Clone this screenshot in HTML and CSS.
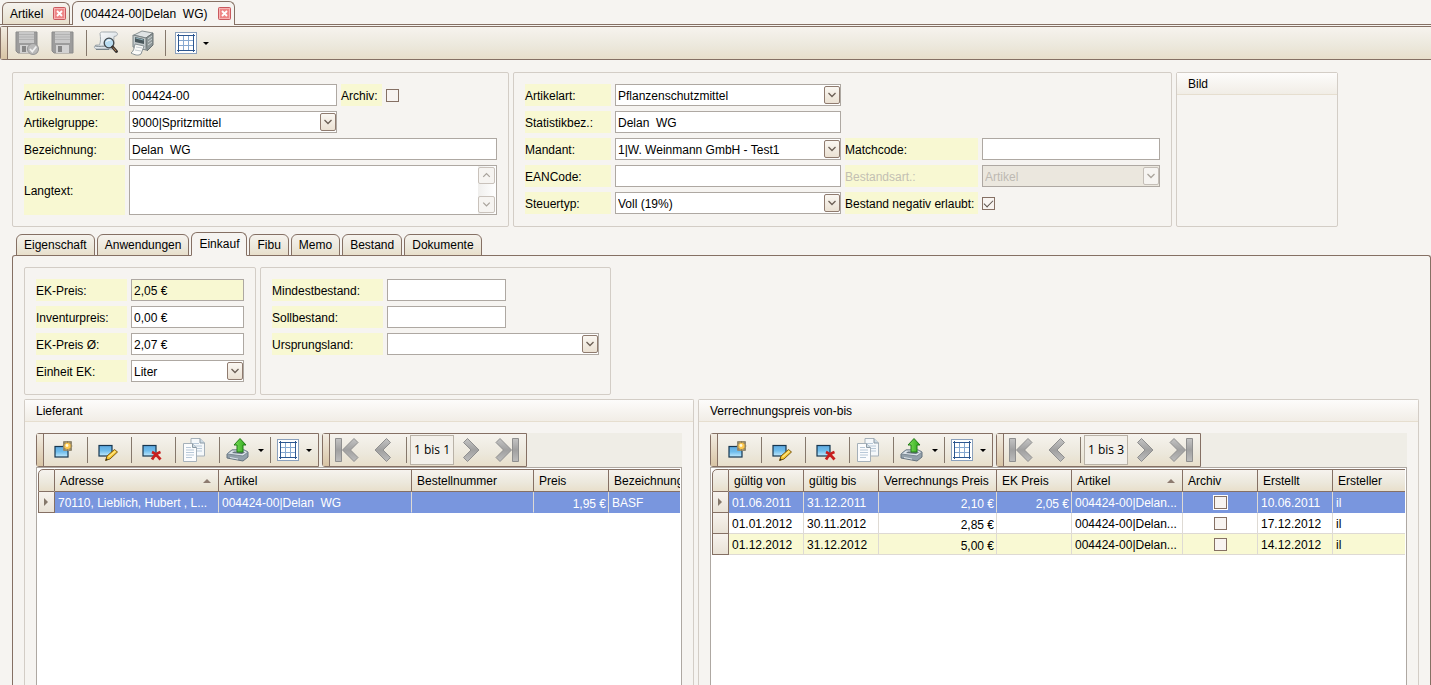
FILE: index.html
```html
<!DOCTYPE html>
<html lang="de">
<head>
<meta charset="utf-8">
<title>Artikel 004424-00</title>
<link rel="stylesheet" href="styles.css">
</head>
<body>
<svg class="defs" aria-hidden="true">
  <defs>
    <linearGradient id="g-blue" x1="0" y1="0" x2="0" y2="1"><stop offset="0" stop-color="#5fa9e0"/><stop offset=".5" stop-color="#6fbdec"/><stop offset="1" stop-color="#c4ebfd"/></linearGradient>
    <linearGradient id="g-gray" x1="0" y1="0" x2="0" y2="1"><stop offset="0" stop-color="#c4c4c4"/><stop offset=".5" stop-color="#a0a0a0"/><stop offset="1" stop-color="#bdbdbd"/></linearGradient>
    <linearGradient id="g-green" x1="0" y1="0" x2="1" y2="0"><stop offset="0" stop-color="#7ee05a"/><stop offset="1" stop-color="#2fa81c"/></linearGradient>
    <linearGradient id="g-paper" x1="0" y1="0" x2="1" y2="1"><stop offset="0" stop-color="#ffffff"/><stop offset="1" stop-color="#c9d3da"/></linearGradient>
    <radialGradient id="g-glow"><stop offset="0" stop-color="#fff3b0"/><stop offset=".45" stop-color="#f0b840"/><stop offset="1" stop-color="#8f8468" stop-opacity=".6"/></radialGradient>
  </defs>
  <symbol id="i-close" viewBox="0 0 13 13"><rect x=".5" y=".5" width="12" height="12" rx="1" fill="#ee8686" stroke="#c9595e"/><rect x="1.500" y="1.500" width="10" height="10" fill="none" stroke="#f7b3b3"/><path d="M4 4l5 5M9 4L4 9" stroke="#fff" stroke-width="1.800"/></symbol>
  <symbol id="i-down" viewBox="0 0 14 16"><path d="M3.500 6L7 9.500 10.500 6" fill="none" stroke="currentColor" stroke-width="1.300"/></symbol>
  <symbol id="i-up" viewBox="0 0 14 16"><path d="M3.500 9.500L7 6l3.500 3.500" fill="none" stroke="currentColor" stroke-width="1.300"/></symbol>
  <symbol id="i-save" viewBox="0 0 24 24"><path d="M1 1h21v21H3l-2-2z" fill="#9c9c9c" stroke="#8b8b8b"/><rect x="4" y="1" width="15" height="11" fill="#c9c9c9"/><path d="M4 3.500h15M4 6h15M4 8.500h15" stroke="#b3b3b3"/><rect x="5" y="14" width="13" height="8" fill="#d2d2d2"/><rect x="7" y="15" width="4" height="6" fill="#858585"/></symbol>
  <symbol id="i-savecheck" viewBox="0 0 24 24"><use href="#i-save" width="24" height="24"/><circle cx="18" cy="18" r="5.500" fill="#b9b9b9" stroke="#969696"/><path d="M15 18l2.300 2.500 4-5" fill="none" stroke="#f0f0f0" stroke-width="1.800"/></symbol>
  <symbol id="i-preview" viewBox="0 0 26 24"><path d="M7 2.500C7.500 1 8.500 1 9.500 1H22c2.500 0 3.500 3 1 4l-2 .5c-.5 4 .5 9-1.500 12.500H4c-3.500 0-3.500-4 0-4h2.500c1.500-4 1-7.500.5-11.500z" fill="url(#g-paper)" stroke="#a3abb0"/><path d="M2 15c5 1 9-.5 12 .5M3 18.500h13" fill="none" stroke="#798388"/><circle cx="16" cy="12" r="4.800" fill="#b9dcf1" stroke="#40474c" stroke-width="1.300"/><path d="M13.500 11a3 3 0 0 1 4-1.700" fill="none" stroke="#fff"/><path d="M19.500 16l4 4.500" stroke="#3a3430" stroke-width="3" stroke-linecap="round"/><path d="M20 16.500l3 3.500" stroke="#b88858"/></symbol>
  <symbol id="i-printer" viewBox="0 0 26 26"><path d="M5 5l8-4 11 2-7 5z" fill="#dfe3e4" stroke="#8b9394"/><path d="M17 8l7-5v12l-6 6z" fill="#8e9798" stroke="#697172"/><path d="M4 5l13 3v12L4 17z" fill="#c3cacb" stroke="#7a8385"/><path d="M6 7l9 2v5l-9-2z" fill="#4a585c"/><path d="M6.500 8l8 2" stroke="#8fb0ba"/><path d="M19 9l4-3M19 12l4-3M19 15l4-3" stroke="#c9d0d1"/><path d="M6 14l9 2-3 8c-3 2-6 1-10-1 3-2 3-5 4-9z" fill="#fbfbf8" stroke="#889194"/><path d="M7 17l6 1M6 20l6 1" stroke="#c5ccd0"/></symbol>
  <symbol id="i-grid" viewBox="0 0 22 22"><rect x=".5" y=".5" width="21" height="21" fill="#fff" stroke="#8aa0bc"/><path d="M3.500 2v18M18.500 2v18M2 3.500h18M2 18.500h18" stroke="#2d5790"/><path d="M8.500 4v14M13.500 4v14M4 8.500h14M4 13.500h14" stroke="#86a8d0"/></symbol>
  <symbol id="i-new" viewBox="0 0 22 22"><rect x="2" y="7.500" width="13" height="10.500" fill="url(#g-blue)" stroke="#17364f" stroke-width="1.200"/><rect x="10" y="2" width="9" height="10" rx="1" fill="#9b9480"/><rect x="10" y="2" width="9" height="10" rx="2" fill="url(#g-glow)"/><path d="M14.500 2v10M9.500 7h10M11 3.500l7 7M18 3.500l-7 7" stroke="#766c52" opacity=".55"/><circle cx="14.500" cy="7" r="3" fill="#ffc94d"/><circle cx="14" cy="6.500" r="1.400" fill="#fffbe0"/></symbol>
  <symbol id="i-edit" viewBox="0 0 22 22"><rect x="2" y="6.500" width="13" height="10.500" fill="url(#g-blue)" stroke="#17364f" stroke-width="1.200"/><path d="M8.500 21.500l1.500-4.500 7.500-6.500 3 2.500-7.500 7z" fill="#f4c430" stroke="#7b5a14"/><path d="M11.500 18l7-6" stroke="#ffe88a" stroke-width="1.300"/><path d="M8.500 21.700l.8-2.400 1.500 1.500z" fill="#332"/></symbol>
  <symbol id="i-delete" viewBox="0 0 22 22"><rect x="2" y="6.500" width="13" height="10.500" fill="url(#g-blue)" stroke="#17364f" stroke-width="1.200"/><path d="M11 13c3.500 1.500 6 4.500 8.500 7.500M19.500 13c-4 1.500-6.500 4-8.500 7.500" fill="none" stroke="#c81e1e" stroke-width="2.800"/></symbol>
  <symbol id="i-copy" viewBox="0 0 22 24"><path d="M8 .5h9l4.500 4.500v13H8z" fill="#f5f8fa" stroke="#a5b0b9"/><path d="M17 .5v4.500h4.500" fill="#ccdae4" stroke="#8c9aa5"/><path d="M10 5.500h6M10 8h9M10 10.500h9M10 13h9" stroke="#b8c8d8"/><path d="M.5 5.500h9l4 4v14H.5z" fill="#fbfcfd" stroke="#a5b0b9"/><path d="M9.500 5.500v4h4" fill="#ccdae4" stroke="#8c9aa5"/><path d="M3 9.500h5M3 12h8M3 14.500h8M3 17h8M3 19.500h6" stroke="#b8c8d8"/></symbol>
  <symbol id="i-export" viewBox="0 0 24 26"><path d="M1 17l5-4h12l4 2v5l-5 4-16-3z" fill="#93a1ab" stroke="#65737e"/><path d="M1 17l5-4h12l4 2-5 4z" fill="#dbe3e9" stroke="#7b8994"/><path d="M6 16l2-1.500h9l2 1-3 1.500z" fill="#66757f"/><path d="M4 20.500l8 1.500" stroke="#dbe3e9"/><path d="M14 1.500L8 8h3v7h6V8h3z" fill="url(#g-green)" stroke="#217a16"/></symbol>
  <symbol id="i-first" viewBox="0 0 24 26"><path d="M.5 1.500h6v23h-6z" fill="url(#g-gray)" stroke="#8f8f8f"/><path d="M19 1.500L7.500 13 19 24.500l4-4L15.500 13 23 5.500z" fill="url(#g-gray)" stroke="#8f8f8f"/></symbol>
  <symbol id="i-prev" viewBox="0 0 18 26"><path d="M12.500 1.500L1 13l11.500 11.500 4-4L9 13l7.500-7.500z" fill="url(#g-gray)" stroke="#8f8f8f"/></symbol>
  <symbol id="i-next" viewBox="0 0 18 26"><path d="M5.500 1.500L17 13 5.500 24.500l-4-4L9 13 1.500 5.500z" fill="url(#g-gray)" stroke="#8f8f8f"/></symbol>
  <symbol id="i-last" viewBox="0 0 24 26"><path d="M5 1.500L16.500 13 5 24.500l-4-4L8.500 13 1 5.500z" fill="url(#g-gray)" stroke="#8f8f8f"/><path d="M17.500 1.500h6v23h-6z" fill="url(#g-gray)" stroke="#8f8f8f"/></symbol>
</svg>

<nav class="doctabs">
  <div class="doctab"><a href="#artikel">Artikel</a><button aria-label="Artikel schließen"><svg width="13" height="13"><use href="#i-close"/></svg></button></div>
  <div class="doctab active"><a href="#detail">(004424-00|Delan&nbsp; WG)</a><button aria-label="Detail schließen"><svg width="13" height="13"><use href="#i-close"/></svg></button></div>
</nav>

<div class="mainbar" role="toolbar">
  <span class="grip"></span>
  <button class="tool" disabled aria-label="Speichern und schließen"><svg width="24" height="24"><use href="#i-savecheck"/></svg></button>
  <button class="tool" disabled aria-label="Speichern"><svg width="24" height="24"><use href="#i-save"/></svg></button>
  <span class="sep"></span>
  <button class="tool" aria-label="Vorschau"><svg width="26" height="24"><use href="#i-preview"/></svg></button>
  <button class="tool" aria-label="Drucken"><svg width="26" height="26"><use href="#i-printer"/></svg></button>
  <span class="sep"></span>
  <button class="tool drop" aria-label="Ansicht"><svg width="22" height="22"><use href="#i-grid"/></svg><i class="caret"></i></button>
</div>

<main>
  <div class="head">
    <section class="group form-a">
      <label for="nr">Artikelnummer:</label>
      <input id="nr" type="text" value="004424-00">
      <div class="archiv"><label for="arch">Archiv:</label><input id="arch" type="checkbox"></div>
      <label for="grp">Artikelgruppe:</label>
      <span class="combo"><select id="grp"><option>9000|Spritzmittel</option></select><svg class="arrow"><use href="#i-down"/></svg></span>
      <label class="newline" for="bez">Bezeichnung:</label>
      <input class="wide" id="bez" type="text" value="Delan  WG">
      <label class="newline" for="lang">Langtext:</label>
      <div class="wide memo"><textarea id="lang"></textarea><div class="scroll"><button disabled aria-label="Nach oben"><svg width="15" height="15"><use href="#i-up"/></svg></button><button disabled aria-label="Nach unten"><svg width="15" height="15"><use href="#i-down"/></svg></button></div></div>
    </section>

    <section class="group form-b">
      <label for="art">Artikelart:</label>
      <span class="combo"><select id="art"><option>Pflanzenschutzmittel</option></select><svg class="arrow"><use href="#i-down"/></svg></span>
      <label class="newline" for="stat">Statistikbez.:</label>
      <input id="stat" type="text" value="Delan  WG">
      <label class="newline" for="mand">Mandant:</label>
      <span class="combo"><select id="mand"><option>1|W. Weinmann GmbH - Test1</option></select><svg class="arrow"><use href="#i-down"/></svg></span>
      <label for="match">Matchcode:</label>
      <input id="match" type="text">
      <label for="ean">EANCode:</label>
      <input id="ean" type="text">
      <label class="off" for="bart">Bestandsart.:</label>
      <span class="combo off"><select id="bart" disabled><option>Artikel</option></select><svg class="arrow"><use href="#i-down"/></svg></span>
      <label for="steuer">Steuertyp:</label>
      <span class="combo"><select id="steuer"><option>Voll (19%)</option></select><svg class="arrow"><use href="#i-down"/></svg></span>
      <label for="neg">Bestand negativ erlaubt:</label>
      <input id="neg" type="checkbox" checked>
    </section>

    <section class="group titled"><h2>Bild</h2></section>
  </div>

  <nav class="subtabs">
    <a href="#eigenschaft">Eigenschaft</a><a href="#anwendungen">Anwendungen</a><a class="active" href="#einkauf">Einkauf</a><a href="#fibu">Fibu</a><a href="#memo">Memo</a><a href="#bestand">Bestand</a><a href="#dokumente">Dokumente</a>
  </nav>

  <div class="page">
    <div class="prices">
      <section class="group form-c">
        <label for="ek">EK-Preis:</label><input class="marked" id="ek" type="text" value="2,05 €">
        <label for="inv">Inventurpreis:</label><input id="inv" type="text" value="0,00 €">
        <label for="avg">EK-Preis Ø:</label><input id="avg" type="text" value="2,07 €">
        <label for="unit">Einheit EK:</label><span class="combo"><select id="unit"><option>Liter</option></select><svg class="arrow"><use href="#i-down"/></svg></span>
      </section>
      <section class="group form-d">
        <label for="min">Mindestbestand:</label><input id="min" type="text">
        <label class="newline" for="soll">Sollbestand:</label><input id="soll" type="text">
        <label class="newline" for="land">Ursprungsland:</label><span class="combo wide"><select id="land"><option></option></select><svg class="arrow"><use href="#i-down"/></svg></span>
      </section>
    </div>

    <div class="lists">
      <section class="group titled list">
        <h2>Lieferant</h2>
        <div class="listbody">
          <div class="bars">
            <div class="bar" role="toolbar">
              <span class="grip"></span>
              <button class="tool" aria-label="Neu"><svg width="22" height="22"><use href="#i-new"/></svg></button><span class="sep"></span>
              <button class="tool" aria-label="Bearbeiten"><svg width="22" height="22"><use href="#i-edit"/></svg></button><span class="sep"></span>
              <button class="tool" aria-label="Löschen"><svg width="22" height="22"><use href="#i-delete"/></svg></button><span class="sep"></span>
              <button class="tool copy" aria-label="Kopieren"><svg width="22" height="24"><use href="#i-copy"/></svg></button><span class="sep"></span>
              <button class="tool drop" aria-label="Export"><svg width="24" height="26"><use href="#i-export"/></svg><i class="caret"></i></button><span class="sep"></span>
              <button class="tool drop view" aria-label="Ansicht"><svg width="22" height="22"><use href="#i-grid"/></svg><i class="caret"></i></button>
            </div>
            <div class="bar pager" role="toolbar">
              <span class="grip"></span>
              <button class="tool" aria-label="Erste"><svg width="24" height="26"><use href="#i-first"/></svg></button>
              <button class="tool" aria-label="Zurück"><svg width="18" height="26"><use href="#i-prev"/></svg></button><span class="sep"></span>
              <span class="pos">1 bis 1</span>
              <button class="tool" aria-label="Weiter"><svg width="18" height="26"><use href="#i-next"/></svg></button>
              <button class="tool" aria-label="Letzte"><svg width="24" height="26"><use href="#i-last"/></svg></button>
            </div>
          </div>
          <div class="gridbox">
            <table>
              <colgroup><col class="w-mark"><col class="w-adr"><col class="w-art"><col class="w-best"><col class="w-num"><col></colgroup>
              <thead><tr><th></th><th class="sorted">Adresse</th><th>Artikel</th><th>Bestellnummer</th><th>Preis</th><th>Bezeichnung</th></tr></thead>
              <tbody><tr class="sel"><td class="mark"><i></i></td><td>70110, Lieblich, Hubert , L...</td><td>004424-00|Delan&nbsp; WG</td><td></td><td class="num">1,95 €</td><td>BASF</td></tr></tbody>
            </table>
          </div>
        </div>
      </section>

      <section class="group titled list">
        <h2>Verrechnungspreis von-bis</h2>
        <div class="listbody">
          <div class="bars">
            <div class="bar" role="toolbar">
              <span class="grip"></span>
              <button class="tool" aria-label="Neu"><svg width="22" height="22"><use href="#i-new"/></svg></button><span class="sep"></span>
              <button class="tool" aria-label="Bearbeiten"><svg width="22" height="22"><use href="#i-edit"/></svg></button><span class="sep"></span>
              <button class="tool" aria-label="Löschen"><svg width="22" height="22"><use href="#i-delete"/></svg></button><span class="sep"></span>
              <button class="tool copy" aria-label="Kopieren"><svg width="22" height="24"><use href="#i-copy"/></svg></button><span class="sep"></span>
              <button class="tool drop" aria-label="Export"><svg width="24" height="26"><use href="#i-export"/></svg><i class="caret"></i></button><span class="sep"></span>
              <button class="tool drop view" aria-label="Ansicht"><svg width="22" height="22"><use href="#i-grid"/></svg><i class="caret"></i></button>
            </div>
            <div class="bar pager" role="toolbar">
              <span class="grip"></span>
              <button class="tool" aria-label="Erste"><svg width="24" height="26"><use href="#i-first"/></svg></button>
              <button class="tool" aria-label="Zurück"><svg width="18" height="26"><use href="#i-prev"/></svg></button><span class="sep"></span>
              <span class="pos">1 bis 3</span>
              <button class="tool" aria-label="Weiter"><svg width="18" height="26"><use href="#i-next"/></svg></button>
              <button class="tool" aria-label="Letzte"><svg width="24" height="26"><use href="#i-last"/></svg></button>
            </div>
          </div>
          <div class="gridbox">
            <table>
              <colgroup><col class="w-mark"><col class="w-num"><col class="w-num"><col class="w-vp"><col class="w-num"><col class="w-art2"><col class="w-num"><col class="w-num"><col></colgroup>
              <thead><tr><th></th><th>gültig von</th><th>gültig bis</th><th>Verrechnungs Preis</th><th>EK Preis</th><th class="sorted">Artikel</th><th>Archiv</th><th>Erstellt</th><th>Ersteller</th></tr></thead>
              <tbody>
                <tr class="sel"><td class="mark"><i></i></td><td>01.06.2011</td><td>31.12.2011</td><td class="num">2,10 €</td><td class="num">2,05 €</td><td>004424-00|Delan...</td><td class="chk"><input type="checkbox" aria-label="Archiv"></td><td>10.06.2011</td><td>il</td></tr>
                <tr><td class="mark"></td><td>01.01.2012</td><td>30.11.2012</td><td class="num">2,85 €</td><td></td><td>004424-00|Delan...</td><td class="chk"><input type="checkbox" aria-label="Archiv"></td><td>17.12.2012</td><td>il</td></tr>
                <tr class="alt"><td class="mark"></td><td>01.12.2012</td><td>31.12.2012</td><td class="num">5,00 €</td><td></td><td>004424-00|Delan...</td><td class="chk"><input type="checkbox" aria-label="Archiv"></td><td>14.12.2012</td><td>il</td></tr>
              </tbody>
            </table>
          </div>
        </div>
      </section>
    </div>
  </div>
</main>
</body>
</html>
```
FILE: styles.css
```css
:root {
  --bg: #f6f4f1;
  --line: #857064;
  --soft: #d3cdc6;
  --field: #aea8a2;
  --yellow: #f8f8d2;
  --metal: linear-gradient(#f6f3ee, #ece8dc 60%, #e8dfcb);
}
* { box-sizing: border-box; }
body {
  margin: 0;
  height: 100vh;
  display: flex;
  flex-direction: column;
  overflow: hidden;
  background: var(--bg);
  color: #000;
  font: 12px/14px "Liberation Sans", Arial, sans-serif;
}
.defs { position: absolute; width: 0; height: 0; }
svg { display: block; flex: none; }
button, input, select, textarea { font: inherit; color: inherit; margin: 0; }
button { border: 0; padding: 0; background: none; }
a { color: inherit; text-decoration: none; }

/* document tabs */
.doctabs {
  display: flex;
  align-items: flex-end;
  gap: 2px;
  height: 25px;
  padding-left: 2px;
  border-bottom: 1px solid var(--line);
  flex: none;
}
.doctab {
  display: flex;
  align-items: center;
  gap: 10px;
  height: 22px;
  padding: 0 3px 0 7px;
  border: 1px solid var(--line);
  border-bottom: 0;
  border-radius: 6px 6px 0 0;
  background: var(--metal);
}
.doctab.active { height: 24px; background: var(--bg); margin-bottom: -1px; }

/* toolbars */
.mainbar {
  display: flex;
  align-items: stretch;
  gap: 6px;
  height: 34px;
  margin-top: 1px;
  border: solid var(--line);
  border-width: 1px 0 1px 1px;
  border-radius: 3px 0 0 3px;
  background: var(--metal);
  flex: none;
}
.grip {
  width: 7px;
  border-right: 1px solid var(--line);
  background: linear-gradient(#f2ece2, #d8c4a4);
  flex: none;
}
.sep { width: 1px; margin: 3px 0; background: #85786b; flex: none; }
.tool { display: flex; align-items: center; justify-content: center; flex: none; }
.caret { border: solid transparent; border-width: 3px 3px 0; border-top-color: #000; }
.mainbar .tool { width: 30px; padding-right: 4px; }
.mainbar .drop { width: 40px; gap: 6px; padding-right: 0; }

.bars { display: flex; gap: 3px; background: #efede6; }
.bar {
  display: flex;
  align-items: stretch;
  height: 34px;
  border: 1px solid var(--line);
  border-radius: 3px 0 0 3px;
  background: var(--metal);
  flex: none;
}
.bar .tool { width: 43px; padding-right: 4px; }
.bar .copy { padding-right: 8px; }
.bar .drop { width: 50px; gap: 8px; padding-right: 0; }
.bar .drop.view { width: 47px; gap: 7px; }
.pager .tool { width: 36px; padding-right: 2px; }
.pager .sep { margin-left: 4px; }
.pos {
  width: 44px;
  margin: 1px 0 1px 3px;
  border: 1px solid #b9b2a7;
  background: #f3f0ea;
  font: 12px/28px "Open Sans", sans-serif;
  text-align: center;
}

/* groups and forms */
main { display: flex; flex-direction: column; flex: 1; min-height: 0; padding: 12px 0 0 12px; }
.head { display: grid; grid-template-columns: 497fr 659fr 162fr 89fr; gap: 4px; flex: none; }
.group { border: 1px solid var(--soft); border-radius: 2px; min-width: 0; }
.form-a, .form-b, .form-c, .form-d {
  display: grid;
  grid-auto-rows: 22px;
  align-content: start;
  gap: 5px 4px;
  padding: 11px;
}
.form-a { grid-template-columns: 101px 208fr 156fr; grid-template-rows: 22px 22px 22px 50px; }
.form-b { grid-template-columns: 86px 226fr 133px 178fr; }
.form-c { grid-template-columns: 91px 1fr; }
.form-d { grid-template-columns: 111px 119fr 89fr; }
.wide { grid-column: 2 / -1; }
.newline { grid-column: 1; }
label {
  display: flex;
  align-items: center;
  padding-top: 1px;
  background: var(--yellow);
  background-clip: padding-box;
  white-space: nowrap;
}
label.off { color: #c3bfb2; }
.archiv { display: flex; gap: 4px; align-items: center; }
.archiv label { height: 22px; width: 41px; }

input[type="text"], select, textarea {
  width: 100%;
  height: 100%;
  min-width: 0;
  border: 1px solid var(--field);
  border-radius: 0;
  background: #fff;
  padding: 1px 2px 0;
  outline: 0;
}
input[type="text"].marked { background: var(--yellow); }
select { appearance: none; }
.combo { position: relative; display: block; min-width: 0; }
.arrow {
  position: absolute;
  top: 2px;
  right: 1px;
  width: 16px;
  height: 18px;
  border: 1px solid #8f7b6f;
  border-radius: 2px;
  background: linear-gradient(#faf7f2, #ebe1d3);
  color: #6b5f55;
  pointer-events: none;
}
.combo.off select { background: #ebe7de; color: #bdb9b2; opacity: 1; }
.combo.off .arrow { background: var(--bg); border-color: #c4beb7; color: #aaa49c; }
input[type="checkbox"] {
  appearance: none;
  display: grid;
  place-items: center;
  width: 13px;
  height: 13px;
  border: 1px solid var(--line);
  background: #f8f4f1;
  align-self: center;
}
input[type="checkbox"]:checked::before {
  content: "";
  width: 4px;
  height: 8px;
  margin-bottom: 2px;
  border: solid #5c534c;
  border-width: 0 1px 1px 0;
  transform: rotate(45deg);
}
.memo { position: relative; }
textarea { display: block; resize: none; }
.scroll {
  position: absolute;
  inset: 1px;
  left: auto;
  width: 18px;
  padding: 1px 0;
  display: flex;
  flex-direction: column;
  justify-content: space-between;
  background: linear-gradient(90deg, #f0efed, #fff);
}
.scroll button { width: 17px; height: 17px; border: 1px solid #c9c2bb; border-radius: 2px; background: var(--bg); color: #a8a29b; }

.titled h2 {
  margin: 0;
  height: 22px;
  padding: 0 11px;
  font: inherit;
  line-height: 23px;
  border-bottom: 1px solid #e6decf;
  background: linear-gradient(#fdfcfb, #f1ede6);
}

/* inner tabs */
.subtabs { display: flex; align-items: flex-end; gap: 2px; padding-left: 4px; margin-top: 5px; height: 24px; flex: none; }
.subtabs a {
  height: 22px;
  padding: 0 7px;
  line-height: 21px;
  border: 1px solid var(--line);
  border-radius: 6px 6px 0 0;
  background: var(--metal);
}
.subtabs a.active { height: 24px; line-height: 23px; background: var(--bg); border-bottom-color: var(--bg); z-index: 1; }
.page {
  display: flex;
  flex-direction: column;
  flex: 1;
  min-height: 0;
  gap: 4px;
  margin-top: -1px;
  padding: 11px 11px 0;
  border: 1px solid var(--line);
  border-bottom: 0;
  border-radius: 3px 3px 0 0;
}
.prices { display: grid; grid-template-columns: 232fr 351fr 804fr; gap: 4px; flex: none; }
.prices .group { padding-bottom: 12px; }
.lists { display: grid; grid-template-columns: 670fr 721fr; gap: 4px; flex: 1; min-height: 0; }
.list { display: flex; flex-direction: column; border-bottom: 0; border-radius: 2px 2px 0 0; }
.listbody { display: flex; flex-direction: column; flex: 1; min-height: 0; padding: 11px 11px 0; }
.gridbox {
  flex: 1;
  min-height: 0;
  overflow: hidden;
  padding: 1px 1px 0;
  border: 1px solid var(--field);
  border-bottom: 0;
  background: #fff;
}

/* data tables */
table { width: 100%; table-layout: fixed; border-collapse: separate; border-spacing: 0; }
.w-mark { width: 17px; }
.w-adr { width: 164px; }
.w-art { width: 193px; }
.w-best { width: 122px; }
.w-num { width: 75px; }
.w-vp { width: 118px; }
.w-art2 { width: 111px; }
th, td { overflow: hidden; white-space: nowrap; text-align: left; font-weight: normal; }
th {
  height: 23px;
  padding: 0 0 0 5px;
  border: solid var(--line);
  border-width: 1px 1px 1px 0;
  background: var(--metal);
}
th:first-child { border-left-width: 1px; border-top-left-radius: 5px; }
th:last-child { border-right: 0; }
th.sorted::after {
  content: "";
  float: right;
  margin: 5px 7px 0 0;
  border: solid transparent;
  border-width: 0 4px 4px;
  border-bottom-color: #8d7b70;
}
td {
  height: 21px;
  padding: 1px 0 0 3px;
  border: solid #dedad4;
  border-width: 0 1px 1px 0;
}
td:last-child { border-right: 0; }
td.num { padding: 3px 2px 0 0; text-align: right; }
td.chk { padding: 0; }
td.chk input { margin: 0 auto; }
td.mark { padding: 0; border-color: var(--line); border-left-width: 1px; background: linear-gradient(#f7f3ee, #e9e2d6); }
td.mark i { display: block; width: 0; margin-left: 5px; border: solid transparent; border-width: 4px 0 4px 4px; border-left-color: #85786b; }
tr.sel td:not(.mark) { background: #7996de; color: #fff; border-bottom-color: #7996de; }
tr.sel .chk input { outline: 1px solid #fff; }
tr.alt td:not(.mark) { background: #f9f9d3; }
```
